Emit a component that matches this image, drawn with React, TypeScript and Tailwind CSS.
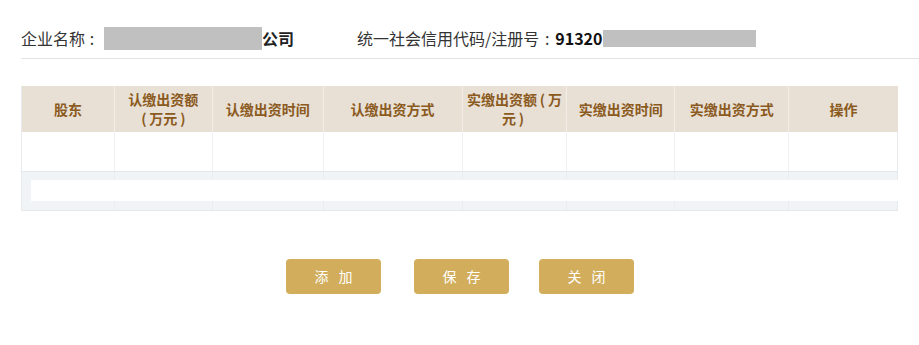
const P = ({ c }: { c: string }) => <span className="inline-block w-[11px] text-center">{c}</span>;

const cols = [
  { w: "w-[93px]", label: [<>股东</>] },
  { w: "w-[98px]", label: [<>认缴出资额</>, <><P c="(" />万元<P c=")" /></>] },
  { w: "w-[111px]", label: [<>认缴出资时间</>] },
  { w: "w-[139px]", label: [<>认缴出资方式</>] },
  { w: "w-[105px]", label: [<>实缴出资额<P c="(" />万</>, <>元<P c=")" /></>] },
  { w: "w-[108px]", label: [<>实缴出资时间</>] },
  { w: "w-[114px]", label: [<>实缴出资方式</>] },
  { w: "w-[109px]", label: [<>操作</>] },
];

function GoldButton({ chars, className = "" }: { chars: [string, string]; className?: string }) {
  return (
    <button
      className={`w-[95px] h-[35px] rounded-[4px] bg-[#d2ae5c] text-white text-[14px] flex items-center justify-center gap-[10px] ${className}`}
    >
      <span>{chars[0]}</span>
      <span>{chars[1]}</span>
    </button>
  );
}

const Colon = ({ w }: { w: string }) => <span className={`inline-block ${w} text-center`}>:</span>;

export default function App() {
  return (
    <div
      className="w-[919px] h-[345px] bg-white text-[#333] overflow-hidden"
      style={{ fontFamily: '"Noto Sans CJK SC", "Noto Sans", sans-serif' }}
    >
      {/* Enterprise info */}
      <div className="ml-[21px] pt-[26px] pb-[8px] border-b border-[#e3e3e3]">
        <div className="flex items-center h-[24px] text-[16px] leading-[24px]">
          <span className="w-[83px] whitespace-nowrap">
            企业名称<Colon w="w-[14px]" />
          </span>
          <span className="w-[158px] h-[23px] bg-[#c0c0c0]" />
          <span className="font-bold text-[#222]">公司</span>
          <span className="ml-[63px] whitespace-nowrap">
            统一社会信用代码/注册号<Colon w="w-[16px]" />
          </span>
          <span className="font-bold text-[#111]">91320</span>
          <span className="w-[153px] h-[17px] bg-[#c0c0c0]" />
        </div>
      </div>

      {/* Shareholder table */}
      <div className="ml-[21px] mt-[27px] w-[877px] border-l border-[#e6eaed]">
        <div className="flex h-[46px] bg-[#e8e0d5]">
          {cols.map((c, i) => (
            <div
              key={i}
              className={`${c.w} flex flex-col items-center justify-center text-[14px] leading-[19px] font-bold text-[#8b5a1e] ${
                i < cols.length - 1 ? "border-r border-[#f2ede6]" : ""
              }`}
            >
              {c.label.map((l, j) => (
                <div key={j} className="whitespace-nowrap">
                  {l}
                </div>
              ))}
            </div>
          ))}
        </div>
        <div className="flex h-[40px] bg-white border-b border-[#e4e8eb]">
          {cols.map((c, i) => (
            <div
              key={i}
              className={`${c.w} ${i < cols.length - 1 ? "border-r border-[#eef1f3]" : "border-r border-[#e6eaed]"}`}
            />
          ))}
        </div>
        <div className="relative flex h-[39px] bg-[#f1f4f6] border-b border-[#e4e8eb]">
          {cols.map((c, i) => (
            <div
              key={i}
              className={`${c.w} ${i < cols.length - 1 ? "border-r border-[#e9edf0]" : "border-r border-[#e6eaed]"}`}
            />
          ))}
          <div className="absolute left-[9px] right-0 top-[8px] h-[21px] bg-white" />
        </div>
      </div>

      {/* Actions */}
      <div className="flex ml-[286px] mt-[48px]">
        <GoldButton chars={["添", "加"]} />
        <GoldButton chars={["保", "存"]} className="ml-[33px]" />
        <GoldButton chars={["关", "闭"]} className="ml-[30px] w-[94px]" />
      </div>
    </div>
  );
}
